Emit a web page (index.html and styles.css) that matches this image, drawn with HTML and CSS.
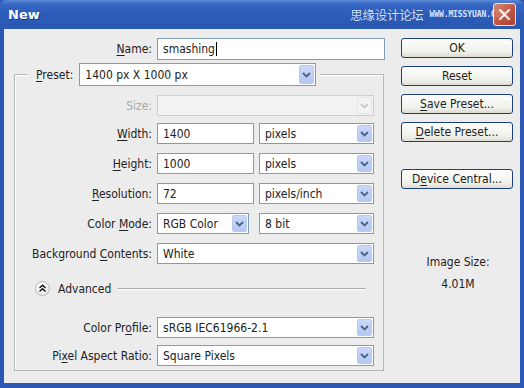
FILE: index.html
```html
<!DOCTYPE html>
<html>
<head>
<meta charset="utf-8">
<link rel="stylesheet" href="styles.css">
</head>
<body>
<div class="window">
  <div class="titlebar">
    <span class="title">New</span>
    <span class="wm"><span class="wm-cn">思缘设计论坛</span><span class="wm-en">WWW.MISSYUAN.COM</span></span>
    <span class="close"><svg width="13" height="13" viewBox="0 0 13 13"><path d="M2 2 L11 11 M11 2 L2 11" stroke="#fff" stroke-width="2.4" stroke-linecap="round"/></svg></span>
  </div>
  <div class="client">
    <div class="main">
      <div class="row name-row">
        <span class="lbl"><u>N</u>ame:</span>
        <div class="field name-field">smashing<span class="caret"></span></div>
      </div>
      <div class="group">
        <div class="preset-row">
          <span class="lbl"><u>P</u>reset:</span>
          <div class="field select preset">1400 px X 1000 px<span class="arrow"><svg width="9" height="6" viewBox="0 0 9 6"><path d="M1 1 L4.5 4.5 L8 1" fill="none" stroke="#4d6185" stroke-width="1.8"/></svg></span></div>
        </div>
        <div class="rows">
          <div class="row size-row">
            <span class="lbl dis">Size:</span>
            <div class="field select disabled full"><span class="arrow"><svg width="9" height="6" viewBox="0 0 9 6"><path d="M1 1 L4.5 4.5 L8 1" fill="none" stroke="#c9c9c9" stroke-width="1.8"/></svg></span></div>
          </div>
          <div class="row first-dim">
            <span class="lbl"><u>W</u>idth:</span>
            <div class="pair">
              <div class="field num">1400</div>
              <div class="field select unit">pixels<span class="arrow"><svg width="9" height="6" viewBox="0 0 9 6"><path d="M1 1 L4.5 4.5 L8 1" fill="none" stroke="#4d6185" stroke-width="1.8"/></svg></span></div>
            </div>
          </div>
          <div class="row">
            <span class="lbl"><u>H</u>eight:</span>
            <div class="pair">
              <div class="field num">1000</div>
              <div class="field select unit">pixels<span class="arrow"><svg width="9" height="6" viewBox="0 0 9 6"><path d="M1 1 L4.5 4.5 L8 1" fill="none" stroke="#4d6185" stroke-width="1.8"/></svg></span></div>
            </div>
          </div>
          <div class="row">
            <span class="lbl"><u>R</u>esolution:</span>
            <div class="pair">
              <div class="field num">72</div>
              <div class="field select unit">pixels/inch<span class="arrow"><svg width="9" height="6" viewBox="0 0 9 6"><path d="M1 1 L4.5 4.5 L8 1" fill="none" stroke="#4d6185" stroke-width="1.8"/></svg></span></div>
            </div>
          </div>
          <div class="row">
            <span class="lbl">Color <u>M</u>ode:</span>
            <div class="pair">
              <div class="field select mode">RGB Color<span class="arrow"><svg width="9" height="6" viewBox="0 0 9 6"><path d="M1 1 L4.5 4.5 L8 1" fill="none" stroke="#4d6185" stroke-width="1.8"/></svg></span></div>
              <div class="field select unit">8 bit<span class="arrow"><svg width="9" height="6" viewBox="0 0 9 6"><path d="M1 1 L4.5 4.5 L8 1" fill="none" stroke="#4d6185" stroke-width="1.8"/></svg></span></div>
            </div>
          </div>
          <div class="row">
            <span class="lbl">Background <u>C</u>ontents:</span>
            <div class="field select full">White<span class="arrow"><svg width="9" height="6" viewBox="0 0 9 6"><path d="M1 1 L4.5 4.5 L8 1" fill="none" stroke="#4d6185" stroke-width="1.8"/></svg></span></div>
          </div>
        </div>
        <div class="advanced">
          <span class="adv-icon"><svg width="9" height="9" viewBox="0 0 9 9"><path d="M1.5 4 L4.5 1.2 L7.5 4 M1.5 7.5 L4.5 4.7 L7.5 7.5" fill="none" stroke="#111" stroke-width="1.4"/></svg></span>
          <span class="adv-text">Advanced</span>
          <span class="adv-line"></span>
        </div>
        <div class="rows adv-rows">
          <div class="row">
            <span class="lbl">Color Pr<u>o</u>file:</span>
            <div class="field select full">sRGB IEC61966-2.1<span class="arrow"><svg width="9" height="6" viewBox="0 0 9 6"><path d="M1 1 L4.5 4.5 L8 1" fill="none" stroke="#4d6185" stroke-width="1.8"/></svg></span></div>
          </div>
          <div class="row">
            <span class="lbl">Pi<u>x</u>el Aspect Ratio:</span>
            <div class="field select full">Square Pixels<span class="arrow"><svg width="9" height="6" viewBox="0 0 9 6"><path d="M1 1 L4.5 4.5 L8 1" fill="none" stroke="#4d6185" stroke-width="1.8"/></svg></span></div>
          </div>
        </div>
      </div>
    </div>
    <div class="side">
      <div class="btn">OK</div>
      <div class="btn">Reset</div>
      <div class="btn"><u>S</u>ave Preset...</div>
      <div class="btn"><u>D</u>elete Preset...</div>
      <div class="btn device">D<u>e</u>vice Central...</div>
      <div class="imgsize">
        <div>Image Size:</div>
        <div class="imgval">4.01M</div>
      </div>
    </div>
  </div>
</div>
</body>
</html>
```

FILE: styles.css
```css
* { box-sizing: border-box; }
html, body { margin: 0; padding: 0; }
body {
  width: 524px;
  height: 388px;
  overflow: hidden;
  font-family: "DejaVu Sans Condensed", "DejaVu Sans", sans-serif;
  font-size: 12px;
  color: #222;
}
u { text-decoration: underline; text-underline-offset: 2px; }

.window {
  width: 524px;
  height: 388px;
  display: flex;
  flex-direction: column;
  background: #2a58b4;
  padding: 0 4px 5px 4px;
}

.titlebar {
  height: 29px;
  margin: 0 -4px;
  display: flex;
  align-items: center;
  padding: 0 8px;
  background: linear-gradient(#5b88d6 0%, #3567c4 15%, #2c5cb8 50%, #2a58b2 100%);
  border-radius: 6px 6px 0 0;
}
.title {
  color: #fff;
  font-family: "DejaVu Sans", sans-serif;
  font-weight: bold;
  font-size: 13px;
  text-shadow: 1px 1px 0 #163b80;
  flex: 1;
}
.wm {
  display: flex;
  align-items: center;
  gap: 6px;
  margin-right: -12px;
}
.wm-cn {
  font-family: "Noto Sans CJK SC", sans-serif;
  font-size: 12.5px;
  line-height: 16px;
  letter-spacing: -0.3px;
  color: #d4e2ff;
  text-shadow: 0 0 1px #1b3a80;
}
.wm-en {
  font-family: "DejaVu Sans Mono", monospace;
  font-size: 8px;
  font-weight: bold;
  color: #d8e4ff;
  letter-spacing: -0.1px;
}
.close {
  width: 23px;
  height: 23px;
  border: 1px solid #fff;
  border-radius: 3px;
  background: linear-gradient(135deg, #f0906a, #d9542c 55%, #c23e1c);
  display: flex;
  align-items: center;
  justify-content: center;
  position: relative;
  opacity: 0.85;
}

.client {
  flex: 1;
  background: #ececec;
  display: flex;
}

.main {
  width: 380px;
  padding-top: 9px;
}

.row {
  display: grid;
  grid-template-columns: 137px 1fr;
  column-gap: 5px;
  align-items: center;
  height: 21px;
}
.name-row {
  grid-template-columns: 148px 228px;
  height: 22px;
}
.lbl {
  text-align: right;
  white-space: nowrap;
}
.lbl.dis { color: #aaa; }

.field {
  height: 21px;
  background: #fff;
  border: 1px solid #7f9db9;
  display: flex;
  align-items: center;
  padding-left: 5px;
  white-space: nowrap;
}
.name-field { height: 22px; }
.caret {
  display: inline-block;
  width: 1px;
  height: 14px;
  background: #000;
  margin-left: 1px;
}
.select { padding-right: 1px; }
.arrow {
  margin-left: auto;
  width: 15px;
  height: 17px;
  background: linear-gradient(#cad9fa, #b3c7f2);
  border: 1px solid #b8cbef;
  border-radius: 2px;
  display: flex;
  align-items: center;
  justify-content: center;
}
.disabled { background: #f2f2f2; border-color: #cfcfcf; }
.disabled .arrow { background: #f4f4f4; border-color: #e4e4e4; }

.full { width: 217px; }
.pair { display: flex; gap: 5px; }
.num { width: 97px; }
.unit { width: 115px; }
.mode { width: 92px; margin-right: 5px; }

.group {
  margin: 14px 0 0 10px;
  width: 370px;
  height: 297px;
  border: 1px solid #b4b4b4;
  box-shadow: inset 1px 1px 0 #fff;
}
.preset-row {
  display: flex;
  width: fit-content;
  align-items: center;
  gap: 6px;
  margin: -12px 0 0 12px;
  padding: 0 4px 0 9px;
  background: #ececec;
  height: 23px;
}
.preset { width: 237px; height: 23px; }
.preset .arrow { height: 19px; }

.rows {
  display: flex;
  flex-direction: column;
  gap: 9px;
  margin-top: 9px;
}
.rows .row { height: 21px; }
.rows .first-dim { margin-top: -2px; }

.advanced {
  display: flex;
  align-items: center;
  margin: 17px 0 0 20px;
  height: 15px;
}
.adv-icon {
  width: 15px;
  height: 15px;
  border-radius: 50%;
  border: 1px solid #b8b8b8;
  background: radial-gradient(circle at 40% 35%, #fff, #e4e4e4);
  display: flex;
  align-items: center;
  justify-content: center;
}
.adv-text { margin-left: 8px; }
.adv-line {
  width: 248px;
  height: 1px;
  background: #a8a8a8;
  margin-left: 7px;
  box-shadow: 0 1px 0 #fff;
}
.adv-rows { margin-top: 21px; gap: 7px; }

.side {
  padding: 9px 0 0 17px;
  display: flex;
  flex-direction: column;
  gap: 8px;
  width: 131px;
}
.btn {
  width: 112px;
  height: 20px;
  border: 1px solid #1c3f80;
  border-radius: 3px;
  background: linear-gradient(#fdfdfb, #f1f1ec 70%, #dedbd0);
  display: flex;
  align-items: center;
  justify-content: center;
  white-space: nowrap;
}
.device { margin-top: 19px; }
.imgsize {
  margin-top: 54px;
  text-align: center;
  line-height: 22px;
}
```
